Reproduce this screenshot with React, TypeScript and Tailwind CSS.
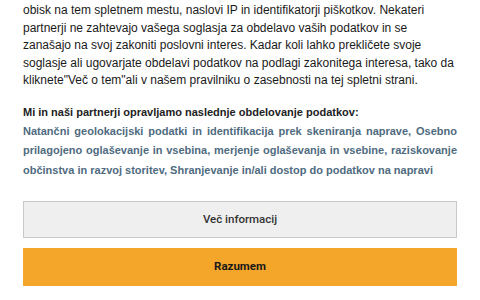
export default function App() {
  return (
    <div className="w-[480px] h-[300px] overflow-hidden bg-white px-[23px] font-['Liberation_Sans',Arial,sans-serif]">
      <p className="pt-[2px] text-[12px] leading-[17.5px] text-[#1a1a1a]">
        obisk na tem spletnem mestu, naslovi IP in identifikatorji piškotkov. Nekateri partnerji ne zahtevajo vašega
        soglasja za obdelavo vaših podatkov in se zanašajo na svoj zakoniti poslovni interes. Kadar koli lahko
        prekličete svoje soglasje ali ugovarjate obdelavi podatkov na podlagi zakonitega interesa, tako da
        kliknete"Več o tem"ali v našem pravilniku o zasebnosti na tej spletni strani.
      </p>
      <div className="mt-[13px]">
        <p className="text-[11px] font-bold leading-[19px] text-[#222]">
          Mi in naši partnerji opravljamo naslednje obdelovanje podatkov:
        </p>
        <p className="text-[11px] font-bold leading-[19.5px] text-[#4f6b80] text-justify">
          Natančni geolokacijski podatki in identifikacija prek skeniranja naprave, Osebno prilagojeno oglaševanje in
          vsebina, merjenje oglaševanja in vsebine, raziskovanje občinstva in razvoj storitev, Shranjevanje in/ali
          dostop do podatkov na napravi
        </p>
      </div>
      <div className="mt-[21px] flex flex-col gap-[10px] font-['Roboto',sans-serif]">
        <button className="h-[37px] w-full border border-[#c8c8c8] bg-[#efefef] text-[11.5px] font-medium text-[#333]">
          Več informacij
        </button>
        <button className="h-[38px] w-full bg-[#f4a62a] text-[11.5px] font-bold text-[#1a1a1a]">Razumem</button>
      </div>
    </div>
  )
}
